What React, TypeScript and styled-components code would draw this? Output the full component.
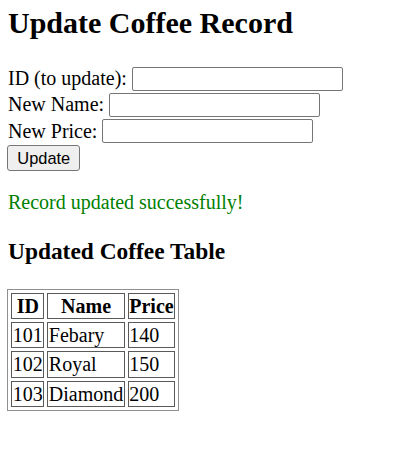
import React from "react";
import styled, { createGlobalStyle } from "styled-components";

const GlobalStyle = createGlobalStyle`
  html, body { margin: 0; padding: 0; background: #ffffff; }
  body {
    font-family: "Liberation Serif", "Times New Roman", serif;
    font-size: 20px;
    color: #000000;
  }
`;

const Page = styled.div`
  padding: 6px 8px 40px 8px;
`;

const Title = styled.h2`
  margin: 0 0 25.5px 0;
  font-size: 30px;
  line-height: 34px;
  font-weight: bold;
`;

const Form = styled.form`
  margin: 0;
`;

const Row = styled.div`
  display: flex;
  align-items: center;
  gap: 5px;
  height: 26.3px;
  line-height: 23px;
`;

const Label = styled.label`
  white-space: nowrap;
`;

const TextInput = styled.input`
  box-sizing: border-box;
  width: 211px;
  height: 24px;
  margin: 0;
  padding: 1px 2px;
  border: 1px solid #767676;
  border-radius: 2px;
  background: #ffffff;
  font-family: "Liberation Sans", Arial, sans-serif;
  font-size: 16.5px;
`;

const Button = styled.button`
  display: block;
  box-sizing: border-box;
  margin: 1px 0 0 -0.7px;
  height: 26px;
  padding: 0 9px;
  border: 1px solid #767676;
  border-radius: 3px;
  background: #efefef;
  color: #000000;
  font-family: "Liberation Sans", Arial, sans-serif;
  font-size: 16.4px;
  line-height: 20px;
`;

const Message = styled.p<{ $tone: string }>`
  margin: 20px 0;
  line-height: 23px;
  color: ${(p) => p.$tone};
`;

const SubTitle = styled.h3`
  margin: 23.4px 0 24px 0;
  font-size: 23.4px;
  line-height: 26.9px;
  font-weight: bold;
`;

const Table = styled.table`
  border: 1px solid #8f8f8f;
  border-spacing: 3px;
  margin-left: -0.7px;
`;

const HeadCell = styled.th`
  border: 1px solid #5a5a5a;
  padding: 1px 0.5px;
  line-height: 22.3px;
  font-weight: bold;
  text-align: center;
`;

const Cell = styled.td`
  border: 1px solid #5a5a5a;
  padding: 1px 0.5px;
  line-height: 22.3px;
  text-align: left;
`;

const coffees = [
  { id: 101, name: "Febary", price: 140 },
  { id: 102, name: "Royal", price: 150 },
  { id: 103, name: "Diamond", price: 200 },
];

export default function App() {
  return (
    <>
      <GlobalStyle />
      <Page>
        <Title>Update Coffee Record</Title>
        <Form onSubmit={(e) => e.preventDefault()}>
          <Row>
            <Label htmlFor="cid">ID (to update):</Label>
            <TextInput id="cid" type="text" />
          </Row>
          <Row>
            <Label htmlFor="cname">New Name:</Label>
            <TextInput id="cname" type="text" />
          </Row>
          <Row>
            <Label htmlFor="cprice">New Price:</Label>
            <TextInput id="cprice" type="text" />
          </Row>
          <Button type="submit">Update</Button>
        </Form>
        <Message $tone="#008000">Record updated successfully!</Message>
        <SubTitle>Updated Coffee Table</SubTitle>
        <Table>
          <thead>
            <tr>
              <HeadCell>ID</HeadCell>
              <HeadCell>Name</HeadCell>
              <HeadCell>Price</HeadCell>
            </tr>
          </thead>
          <tbody>
            {coffees.map((c) => (
              <tr key={c.id}>
                <Cell>{c.id}</Cell>
                <Cell>{c.name}</Cell>
                <Cell>{c.price}</Cell>
              </tr>
            ))}
          </tbody>
        </Table>
      </Page>
    </>
  );
}
